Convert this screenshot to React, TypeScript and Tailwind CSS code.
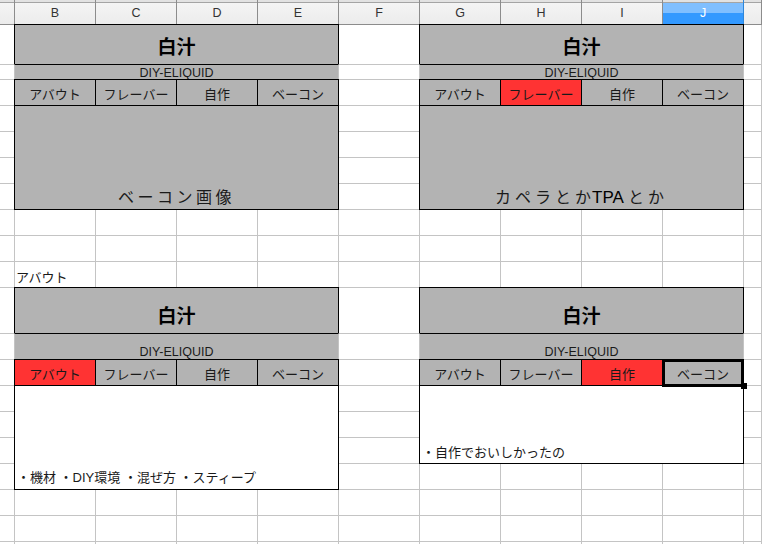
import React from 'react';

const COLS = ['A', 'B', 'C', 'D', 'E', 'F', 'G', 'H', 'I', 'J', 'K'];

// full class names so tailwind can see them
const COL_START = [
  'col-start-1', 'col-start-2', 'col-start-3', 'col-start-4', 'col-start-5', 'col-start-6',
  'col-start-7', 'col-start-8', 'col-start-9', 'col-start-10', 'col-start-11',
];
const ROW_START = [
  'row-start-1', 'row-start-2', 'row-start-3', 'row-start-4', 'row-start-5', 'row-start-6',
  'row-start-7', 'row-start-8', 'row-start-9', 'row-start-10', 'row-start-11', 'row-start-12',
  'row-start-13', 'row-start-14', 'row-start-15', 'row-start-16', 'row-start-17', 'row-start-18',
  'row-start-19', 'row-start-20', 'row-start-21',
];

const font = "font-['Liberation_Sans','Noto_Sans_CJK_JP',sans-serif]";
const gray = 'bg-[#b3b3b3]';
const red = 'bg-[#ff3333]';
const tabs = ['アバウト', 'フレーバー', '自作', 'ベーコン'];

function Block({ col, row, active, selected = -1, tall, children }: { col: number; row: number; active: number; selected?: number; tall?: boolean; children?: React.ReactNode }) {
  return (
    <>
      <div className={`${COL_START[col]} ${ROW_START[row]} col-span-4 -ml-px -mt-px ${gray} border border-black flex items-end justify-center pb-[7px]`}>
        <span className="text-[19px] font-bold leading-none text-black">白汁</span>
      </div>
      <div className={`${COL_START[col]} ${ROW_START[row + 1]} col-span-4 -ml-px -mt-px ${gray} border-y border-y-black border-x border-x-[#c4c4c4] flex items-end justify-center`}>
        <span className={`text-[12.5px] leading-none text-[#1a1a1a] ${tall ? 'pb-px' : ''}`}>DIY-ELIQUID</span>
      </div>
      {tabs.map((t, i) => (
        <div
          key={t}
          className={`${COL_START[col + i]} ${ROW_START[row + 2]} -ml-px -mt-px border border-black flex items-end justify-center pb-[4px] ${i === active ? red : gray} ${i === selected ? 'relative z-10' : ''}`}
        >
          <span className="text-[13px] leading-none text-[#1a1a1a]">{t}</span>
          {i === selected && (
            <>
              {/* cell cursor */}
              <div className="absolute -left-px -top-px -right-px -bottom-[2px] border-[3px] border-black" />
              <div className="absolute -right-[4px] -bottom-[4px] w-[6px] h-[6px] bg-black" />
            </>
          )}
        </div>
      ))}
      {children}
    </>
  );
}

export default function App() {
  const cells: React.ReactNode[] = [];
  COLS.forEach((c, ci) => {
    const isJ = c === 'J';
    cells.push(
      <div
        key={`h-${c}`}
        className={`${COL_START[ci]} row-start-1 border-b border-r flex items-center justify-center pt-[3px] text-[12.5px] leading-none ${
          isJ
            ? 'border-[#2f86d8] text-white bg-[linear-gradient(to_bottom,#e2e2e2_0px,#e2e2e2_2px,#a4a4a4_2px,#a4a4a4_3px,#80bfff_3px,#80bfff_13px,#3399ff_13px)]'
            : 'border-[#8c8c8c] text-[#333] bg-[linear-gradient(to_bottom,#e2e2e2_0px,#e2e2e2_2px,#a4a4a4_2px,#a4a4a4_3px,#f4f4f4_3px,#ececec_100%)]'
        }`}
      >
        {c === 'A' || c === 'K' ? '' : c}
      </div>
    );
    for (let r = 1; r <= 20; r++) {
      cells.push(
        <div key={`${c}-${r}`} className={`${COL_START[ci]} ${ROW_START[r]} border-r border-b border-[#c4c4c4] bg-white`} />
      );
    }
  });

  return (
    <div className={`h-[544px] w-[762px] overflow-hidden bg-white ${font}`}>
      <div className="grid grid-cols-[15px_repeat(9,81px)_1fr] grid-rows-[25px_40px_15px_repeat(8,26px)_46px_repeat(9,26px)]">
        {cells}

        {/* top blocks */}
        <Block col={1} row={1} active={-1}>
          <div className={`col-start-2 row-start-5 col-span-4 row-span-4 -ml-px -mt-px ${gray} border border-black flex items-end justify-center pb-[3px]`}>
            <span className="text-[16px] leading-none tracking-[3.5px] text-[#1a1a1a]">ベーコン画像</span>
          </div>
        </Block>
        <Block col={6} row={1} active={1}>
          <div className={`col-start-7 row-start-5 col-span-4 row-span-4 -ml-px -mt-px ${gray} border border-black flex items-end justify-center pb-[3px]`}>
            <span className="text-[16px] leading-none tracking-[4px] text-[#1a1a1a]">
              カペラとか<span className="tracking-normal text-[17px] text-black -ml-[3px] mr-[4px]">TPA</span>とか
            </span>
          </div>
        </Block>

        <div className="col-start-2 row-start-11 flex items-end pb-[4px] pl-[1px] whitespace-nowrap">
          <span className="text-[13px] leading-none text-[#1a1a1a]">アバウト</span>
        </div>

        {/* bottom blocks */}
        <Block col={1} row={11} active={0} tall>
          <div className="col-start-2 row-start-15 col-span-4 row-span-4 -ml-px -mt-px bg-white border border-black flex items-end pb-[5px] pl-[2px] whitespace-nowrap">
            <span className="text-[13px] leading-none text-[#1a1a1a]">・機材 ・DIY環境 ・混ぜ方 ・スティープ</span>
          </div>
        </Block>
        <Block col={6} row={11} active={2} selected={3} tall>
          <div className="col-start-7 row-start-15 col-span-4 row-span-3 -ml-px -mt-px bg-white border border-black flex items-end pb-[4px] pl-[2px] whitespace-nowrap">
            <span className="text-[13px] leading-none text-[#1a1a1a]">・自作でおいしかったの</span>
          </div>
        </Block>
      </div>
    </div>
  );
}
